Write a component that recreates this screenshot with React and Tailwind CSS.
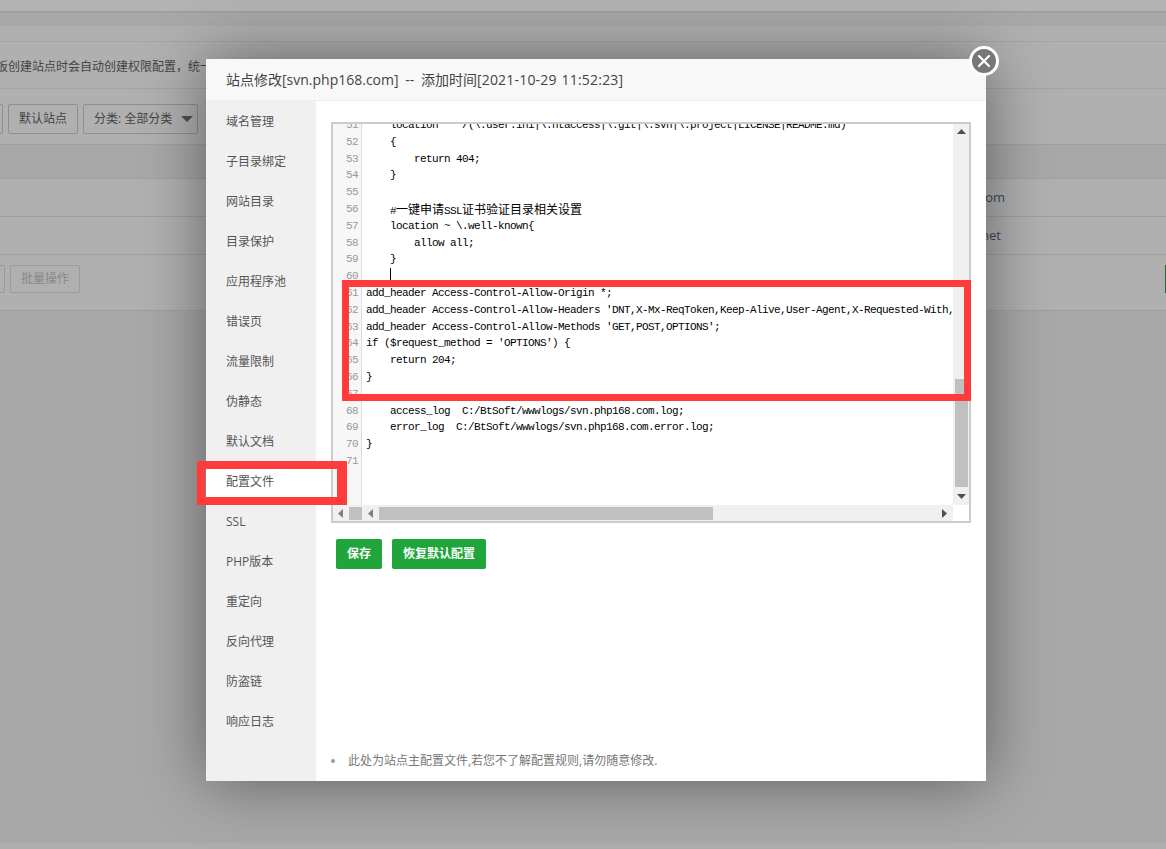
const nav = ["域名管理","子目录绑定","网站目录","目录保护","应用程序池","错误页","流量限制","伪静态","默认文档","配置文件","SSL","PHP版本","重定向","反向代理","防盗链","响应日志"];

const lines = [
  [51, "    location    /(\\.user.ini|\\.htaccess|\\.git|\\.svn|\\.project|LICENSE|README.md)"],
  [52, "    {"],
  [53, "        return 404;"],
  [54, "    }"],
  [55, ""],
  [56, null],
  [57, "    location ~ \\.well-known{"],
  [58, "        allow all;"],
  [59, "    }"],
  [60, "CURSOR"],
  [61, "add_header Access-Control-Allow-Origin *;"],
  [62, "add_header Access-Control-Allow-Headers 'DNT,X-Mx-ReqToken,Keep-Alive,User-Agent,X-Requested-With,"],
  [63, "add_header Access-Control-Allow-Methods 'GET,POST,OPTIONS';"],
  [64, "if ($request_method = 'OPTIONS') {"],
  [65, "    return 204;"],
  [66, "}"],
  [67, ""],
  [68, "    access_log  C:/BtSoft/wwwlogs/svn.php168.com.log;"],
  [69, "    error_log  C:/BtSoft/wwwlogs/svn.php168.com.error.log;"],
  [70, "}"],
  [71, ""],
];

const ui = { fontFamily: '"Open Sans", "Noto Sans CJK SC", sans-serif' };

function Tri({ dir, className, fill = "#505050" }) {
  const pts = { up: "0,5 9,5 4.5,0", down: "0,0 9,0 4.5,5", left: "5,0 5,9 0,4.5", right: "0,0 0,9 5,4.5" }[dir];
  const size = dir === "up" || dir === "down" ? { w: 9, h: 5 } : { w: 5, h: 9 };
  return (
    <svg width={size.w} height={size.h} viewBox={`0 0 ${size.w} ${size.h}`} className={className} preserveAspectRatio="none">
      <polygon points={pts} fill={fill} />
    </svg>
  );
}

function Background() {
  return (
    <div className="w-full h-[849px] flex flex-col bg-[#a8a8a8] overflow-hidden text-[12px]" style={ui}>
      <div className="h-[11px] shrink-0 bg-[#b3b3b3] border-b-2 border-[#a0a0a0] box-content" />
      <div className="h-[13px] shrink-0 bg-[#a8a8a8]" />
      <div className="h-[15px] shrink-0 bg-[#b0b0b0] border-b border-[#a5a5a5] box-content" />
      <div className="h-[46px] shrink-0 bg-[#b0b0b0] border-b border-[#a3a3a3] box-content flex items-center whitespace-nowrap text-[#444] text-[12px] -ml-[4px]">
        <span className="mt-[3px]">板创建站点时会自动创建权限配置，统一</span>
      </div>
      <div className="h-[55px] shrink-0 bg-[#b0b0b0] border-b border-[#a0a0a0] box-content flex items-center gap-[5px] text-[#444]">
        <div className="w-[3px] h-[30px] mt-[5px] border border-l-0 border-[#8f8f8f] rounded-r-[2px]" />
        <div className="w-[70px] h-[30px] mt-[5px] border border-[#8f8f8f] rounded-[2px] flex items-center justify-center">默认站点</div>
        <div className="w-[115px] h-[30px] mt-[5px] border border-[#8f8f8f] rounded-[2px] flex items-center pl-[10px] gap-[9px]">
          <span>分类: 全部分类</span>
          <Tri dir="down" className="w-[12px] h-[6px]" />
        </div>
      </div>
      <div className="h-[33px] shrink-0 bg-[#a8a8a8] border-b border-[#a0a0a0] box-content" />
      <div className="h-[37px] shrink-0 bg-[#b0b0b0] border-b border-[#a0a0a0] box-content flex items-center justify-end pr-[161px] text-[#3d4a5c] text-[13px]">com</div>
      <div className="h-[37px] shrink-0 bg-[#b0b0b0] border-b border-[#a0a0a0] box-content flex items-center justify-end pr-[165px] text-[#3d4a5c] text-[13px]">net</div>
      <div className="h-[55px] shrink-0 bg-[#b0b0b0] border-b border-[#a0a0a0] box-content flex items-center gap-[5px] text-[#888]">
        <div className="w-[5px] h-[28px] -mt-[7px] border border-l-0 border-[#9a9a9a] rounded-r-[2px]" />
        <div className="w-[70px] h-[28px] -mt-[7px] border border-[#9a9a9a] rounded-[2px] flex items-center justify-center">批量操作</div>
        <div className="ml-auto w-[1px] h-[28px] -mt-[7px] bg-[#1c6e2e]" />
      </div>
      <div className="flex-1 bg-[#a8a8a8]" />
      <div className="h-[6px] shrink-0 bg-[#adadad]" />
    </div>
  );
}

function Editor() {
  const cjk = { fontFamily: '"Noto Sans CJK SC", sans-serif' };
  return (
    <div className="w-[640px] h-[401px] border-2 border-[#cccccc] bg-white relative overflow-hidden flex flex-col">
      <div className="flex-1 flex min-h-0 overflow-hidden">
        <div className="flex-1 min-w-0 overflow-hidden">
          <div className="-mt-[7px]">
            {lines.map(([n, t]) => (
              <div key={n} className="h-[16.8px] leading-[16.8px] flex whitespace-nowrap text-black" style={{ fontFamily: '"Liberation Mono", monospace', fontSize: 11 }}>
                <div className="w-[25px] shrink-0 bg-[#f7f7f7] border-r border-[#dddddd] box-content text-[#999] text-right pr-[3px] tracking-[-0.6px]">{n}</div>
                <div className="pl-[4px] tracking-[-0.6px] whitespace-pre">
                  {t === null ? (
                    <>
                      {"    #"}
                      <span className="text-[12px] tracking-normal" style={cjk}>一键申请</span>
                      SSL
                      <span className="text-[12px] tracking-normal" style={cjk}>证书验证目录相关设置</span>
                    </>
                  ) : t === "CURSOR" ? (
                    <span className="block w-[1px] h-[16.8px] ml-[24px] bg-black" />
                  ) : t}
                </div>
              </div>
            ))}
            <div className="w-[25px] bg-[#f7f7f7] border-r border-[#dddddd] box-content pr-[3px] h-[60px]" />
          </div>
        </div>
        <div className="w-[16px] shrink-0 bg-[#f0f0f0] flex flex-col items-center relative">
          <Tri dir="up" className="mt-[5px]" />
          <div className="w-[13px] h-[108px] bg-[#c0c0c0] mt-[245px]" />
          <Tri dir="down" className="mt-[7px]" />
        </div>
      </div>
      <div className="h-[16px] shrink-0 flex">
        <div className="flex-1 bg-[#f0f0f0] flex items-center relative">
          <Tri dir="left" className="ml-[5px]" fill="#808080" />
          <div className="w-[13px] h-[13px] bg-[#c0c0c0] ml-[6px]" />
          <Tri dir="left" className="ml-[6px]" fill="#808080" />
          <div className="w-[334px] h-[13px] bg-[#c0c0c0] ml-[6px]" />
          <div className="flex-1" />
          <Tri dir="right" className="mr-[6px]" />
        </div>
        <div className="w-[16px] bg-white" />
      </div>
    </div>
  );
}

function Modal() {
  return (
    <div className="absolute left-[206px] top-[59px] w-[780px] h-[722px] bg-white flex flex-col shadow-[0_0_60px_rgba(0,0,0,0.45)]" style={ui}>
      <div className="h-[41px] shrink-0 bg-[#f8f8f8] border-b border-[#eeeeee] box-content flex items-center pl-[20px] text-[14px] text-[#444] whitespace-pre">
        <span>站点修改[svn.php168.com]<span className="[word-spacing:3px]"> -- </span>添加时间<span className="tracking-[0.2px] [word-spacing:1px]">[2021-10-29 11:52:23]</span></span>
      </div>
      <div className="flex-1 flex min-h-0">
        <div className="w-[110px] shrink-0 bg-[#f0f0f0] flex flex-col">
          {nav.map((n) => (
            <div key={n} className={`h-[40px] flex items-center pl-[20px] pt-[1px] text-[12px] text-[#555] ${n === "配置文件" ? "bg-white" : ""}`}>{n}</div>
          ))}
        </div>
        <div className="flex-1 min-w-0 flex flex-col pl-[15px] pt-[21px]">
          <Editor />
          <div className="flex gap-[10px] mt-[16px] ml-[5px]">
            <button className="w-[46px] h-[30px] bg-[#20a53a] rounded-[2px] text-white text-[12px] font-bold">保存</button>
            <button className="w-[94px] h-[30px] bg-[#20a53a] rounded-[2px] text-white text-[12px] font-bold">恢复默认配置</button>
          </div>
          <div className="flex-1" />
          <div className="flex items-center mb-[11px] text-[12px] text-[#777] whitespace-nowrap">
            <span className="w-[4px] h-[4px] rounded-full bg-[#999] mr-[13px]" />
            此处为站点主配置文件,若您不了解配置规则,请勿随意修改.
          </div>
        </div>
      </div>
    </div>
  );
}

export default function App() {
  return (
    <div className="relative w-full h-[849px] overflow-hidden">
      <Background />
      <Modal />
      <button className="absolute left-[969px] top-[46px] w-[30px] h-[30px] rounded-full bg-[#777777] border-[3px] border-white flex items-center justify-center">
        <svg width="12" height="12" viewBox="0 0 12 12"><path d="M1 1 L11 11 M11 1 L1 11" stroke="#fff" strokeWidth="2.2" strokeLinecap="round" /></svg>
      </button>
      <div className="absolute left-[197px] top-[461px] w-[150px] h-[44px] border-[8px] border-r-[10px] border-[#ff3b3b]" />
      <div className="absolute left-[342px] top-[280px] w-[629px] h-[121px] border-[7px] border-[#ff3b3b]" />
    </div>
  );
}
